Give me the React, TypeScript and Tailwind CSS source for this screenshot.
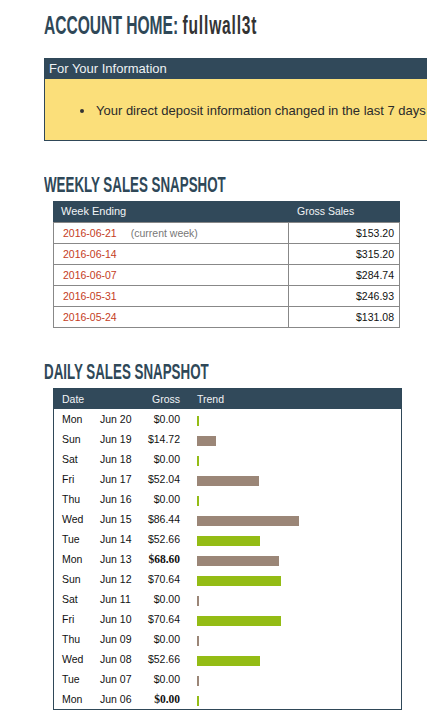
import React from "react";

const weekly: { d: string; amt: string; current?: boolean }[] = [
  { d: "2016-06-21", amt: "$153.20", current: true },
  { d: "2016-06-14", amt: "$315.20" },
  { d: "2016-06-07", amt: "$284.74" },
  { d: "2016-05-31", amt: "$246.93" },
  { d: "2016-05-24", amt: "$131.08" },
];

type Day = { day: string; date: string; v: number; green: boolean; bold?: boolean };
const daily: Day[] = [
  { day: "Mon", date: "Jun 20", v: 0, green: true },
  { day: "Sun", date: "Jun 19", v: 14.72, green: false },
  { day: "Sat", date: "Jun 18", v: 0, green: true },
  { day: "Fri", date: "Jun 17", v: 52.04, green: false },
  { day: "Thu", date: "Jun 16", v: 0, green: true },
  { day: "Wed", date: "Jun 15", v: 86.44, green: false },
  { day: "Tue", date: "Jun 14", v: 52.66, green: true },
  { day: "Mon", date: "Jun 13", v: 68.6, green: false, bold: true },
  { day: "Sun", date: "Jun 12", v: 70.64, green: true },
  { day: "Sat", date: "Jun 11", v: 0, green: false },
  { day: "Fri", date: "Jun 10", v: 70.64, green: true },
  { day: "Thu", date: "Jun 09", v: 0, green: false },
  { day: "Wed", date: "Jun 08", v: 52.66, green: true },
  { day: "Tue", date: "Jun 07", v: 0, green: false },
  { day: "Mon", date: "Jun 06", v: 0, green: true, bold: true },
];

const headFont = {
  fontFamily: '"Liberation Sans", Arial, sans-serif',
};

export default function App() {
  return (
    <div
      className="w-[427px] h-[725px] overflow-hidden bg-white"
      style={{ fontFamily: '"Liberation Sans", Arial, sans-serif' }}
    >
      <div className="pl-[44px] pt-[12px]">
        {/* Title */}
        <div className="h-[19px] whitespace-nowrap">
          <div
            className="w-max origin-top-left scale-x-[0.82] scale-y-[1.35] text-[19px] leading-[19px] font-bold text-[#2f4858]"
            style={headFont}
          >
            ACCOUNT HOME: <span className="text-[#333333] tracking-[1px]">fullwall3t</span>
          </div>
        </div>

        {/* Info box */}
        <div className="mt-[27px] w-[430px] border border-[#2f4858]">
          <div className="h-[20px] bg-[#31495a] pl-[4px] text-[13px] leading-[20px] text-[#eef2f4] whitespace-nowrap">
            For Your Information
          </div>
          <div className="bg-[#fbdf7a] pt-[24px] pb-[21px] whitespace-nowrap">
            <div className="flex items-center h-[16px]">
              <span className="ml-[35px] w-[4px] h-[4px] rounded-full bg-[#333]" />
              <span className="ml-[12px] text-[13px] leading-[16px] text-[#2b2b2b]">
                Your direct deposit information changed in the last 7 days
              </span>
            </div>
          </div>
        </div>

        {/* Weekly heading */}
        <div className="mt-[32px] h-[16px] whitespace-nowrap">
          <div
            className="w-max origin-top-left scale-x-[0.82] scale-y-[1.35] text-[16.3px] leading-[16px] font-bold text-[#2f4858]"
            style={headFont}
          >
            WEEKLY SALES SNAPSHOT
          </div>
        </div>

        {/* Weekly table */}
        <div className="mt-[12px] ml-[9px] w-[347px] text-[10.5px]">
          <div className="flex h-[21px] bg-[#31495a] text-[#f2f4f6] leading-[21px]">
            <div className="w-[236px] pl-[8px] text-[11px]">Week Ending</div>
            <div className="flex-1 pl-[8px]">Gross Sales</div>
          </div>
          <div className="border-b border-[#888888]">
            {weekly.map((w) => (
              <div
                key={w.d}
                className="flex h-[21px] border-t border-x border-[#888888] leading-[20px]"
              >
                <div className="w-[235px] pl-[9px] border-r border-[#888888] whitespace-nowrap">
                  <span className="text-[#c43c24]">{w.d}</span>
                  {w.current && <span className="ml-[14px] text-[#777777]">(current week)</span>}
                </div>
                <div className="flex-1 text-right pr-[5px] text-[#111111]">{w.amt}</div>
              </div>
            ))}
          </div>
        </div>

        {/* Daily heading */}
        <div className="mt-[32px] h-[16px] whitespace-nowrap">
          <div
            className="w-max origin-top-left scale-x-[0.82] scale-y-[1.35] text-[16.3px] leading-[16px] font-bold text-[#2f4858]"
            style={headFont}
          >
            DAILY SALES SNAPSHOT
          </div>
        </div>

        {/* Daily table */}
        <div className="mt-[12px] ml-[9px] w-[349px] border border-[#2f4858] text-[10.5px]">
          <div className="flex h-[20px] bg-[#31495a] text-[#f2f4f6] leading-[20px]">
            <div className="w-[46px] pl-[8px]">Date</div>
            <div className="w-[40px]" />
            <div className="w-[40px] text-right">Gross</div>
            <div className="flex-1 pl-[17px]">Trend</div>
          </div>
          {daily.map((d, i) => (
            <div key={i} className="flex h-[20px] leading-[20px] text-[#111111]">
              <div className="w-[46px] pl-[8px]">{d.day}</div>
              <div className="w-[40px] whitespace-nowrap">{d.date}</div>
              <div
                className={
                  d.bold
                    ? "w-[40px] text-right font-bold text-[11.5px]"
                    : "w-[40px] text-right"
                }
                style={d.bold ? { fontFamily: '"Liberation Serif", "Times New Roman", serif' } : undefined}
              >
                ${d.v.toFixed(2)}
              </div>
              <div className="flex-1 pl-[17px] pt-[7px]">
                <div
                  className={d.green ? "h-[10px] bg-[#94bc15]" : "h-[10px] bg-[#9b8677]"}
                  style={{ width: `${Math.round(2 + d.v * 1.16)}px` }}
                />
              </div>
            </div>
          ))}
        </div>
      </div>
    </div>
  );
}
